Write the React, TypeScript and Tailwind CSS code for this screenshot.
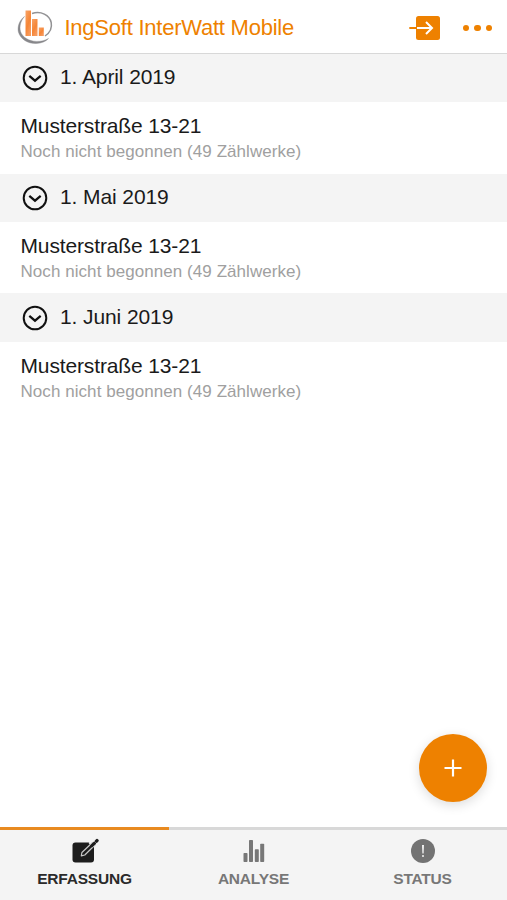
interface Reading {
  date: string;
  address: string;
  state: string;
}

const readings: Reading[] = [
  { date: '1. April 2019', address: 'Musterstraße 13-21', state: 'Noch nicht begonnen (49 Zählwerke)' },
  { date: '1. Mai 2019', address: 'Musterstraße 13-21', state: 'Noch nicht begonnen (49 Zählwerke)' },
  { date: '1. Juni 2019', address: 'Musterstraße 13-21', state: 'Noch nicht begonnen (49 Zählwerke)' },
];

function Logo() {
  return (
    <svg className="mt-[2px]" width="38" height="38" viewBox="0 0 38 38" fill="none">
      <defs>
        <linearGradient id="bar" x1="0" y1="0" x2="0.6" y2="1">
          <stop offset="0" stopColor="#f8a468" />
          <stop offset="0.6" stopColor="#f58536" />
          <stop offset="1" stopColor="#f89a5c" />
        </linearGradient>
      </defs>
      {/* Open swoosh around the bars */}
      <path
        d="M8.500 7.500C3.500 11 1.200 17.500 2.400 23C4.500 30.500 12.500 35 20.500 34.500C25.500 34.200 30 32.500 32.500 29.500C29 31.600 25 32.500 20.500 32.400C13 32.200 6.500 28.500 4.500 22.500C3.200 17.500 4.500 12 8.500 7.500Z"
        fill="#87878a"
        stroke="#87878a"
        strokeWidth="0.400"
      />
      <path d="M16 4.500C25 1.700 33.500 6 35.200 13.500C36.300 19 33.500 24 29 27" stroke="#929294" strokeWidth="1.500" />
      <path d="M9.500 1.500h5.500v25.500H9.500z" fill="url(#bar)" />
      <path d="M16 10h5.500v17H16z" fill="url(#bar)" />
      <path d="M22.800 18.500h5v8.500h-5z" fill="url(#bar)" />
    </svg>
  );
}

function LoginIcon() {
  return (
    <svg width="32" height="26" viewBox="0 0 32 26" fill="none">
      <rect x="7" y="1" width="24" height="24" rx="2.500" fill="#ee8100" />
      <path d="M0.300 13h7" stroke="#ee8100" strokeWidth="2" />
      <path d="M8 13h15M17 7l6 6l-6 6" stroke="#fff" strokeWidth="2" />
    </svg>
  );
}

function ChevronCircle() {
  return (
    <svg width="26" height="26" viewBox="0 0 26 26" fill="none" stroke="#111" strokeWidth="2">
      <circle cx="13" cy="13" r="11.300" />
      <path d="M7.300 10.800l5.700 4.900l5.700-4.900" strokeWidth="2.200" />
    </svg>
  );
}

function EditIcon() {
  return (
    <svg width="28" height="26" viewBox="0 0 28 26" fill="none">
      <rect x="1.500" y="4.500" width="21.500" height="20" rx="3" fill="#1d1d1d" />
      {/* Pencil: light casing first, dark barrel and tip on top */}
      <path d="M19.500 7L24.500 2" stroke="#f3f3f3" strokeWidth="5.500" />
      <path d="M21.500 4.500L10.900 14.500L10.300 17.800L13.800 17L24.500 6.500" fill="#1d1d1d" stroke="#c9c9c9" strokeWidth="1.200" strokeLinejoin="round" />
      <path d="M20 8.500L24.300 4.400" stroke="#1d1d1d" strokeWidth="3" />
      <path d="M25.500 3.100L26 2.600" stroke="#1d1d1d" strokeWidth="3.400" strokeLinecap="round" />
    </svg>
  );
}

function ChartIcon() {
  return (
    <svg width="28" height="26" viewBox="0 0 28 26" fill="#777">
      <rect x="3.500" y="15" width="4" height="9" rx="0.700" />
      <rect x="9" y="2" width="4" height="22" rx="0.700" />
      <rect x="14.800" y="11.300" width="4" height="12.700" rx="0.700" />
      <rect x="20.200" y="5.700" width="4" height="18.300" rx="0.700" />
    </svg>
  );
}

function StatusIcon() {
  return (
    <svg width="28" height="26" viewBox="0 0 28 26">
      <circle cx="14" cy="13" r="12" fill="#737373" />
      <path d="M13 7h2l-.4 8.500h-1.200z" fill="#f3f3f3" />
      <circle cx="14" cy="18" r="1" fill="#f3f3f3" />
    </svg>
  );
}

const tabs = [
  { label: 'ERFASSUNG', icon: <EditIcon />, active: true },
  { label: 'ANALYSE', icon: <ChartIcon />, active: false },
  { label: 'STATUS', icon: <StatusIcon />, active: false },
];

export default function App() {
  return (
    <div className="relative flex h-[900px] w-[507px] flex-col overflow-hidden bg-white font-['Liberation_Sans',Arial,sans-serif] text-[#1a1a1a]">
      <header className="flex h-[54px] shrink-0 items-center border-b border-[#d8d8d8] pr-[15px] pl-[16px] text-[#ee8100]">
        <Logo />
        <h1 className="mt-[2px] ml-[10.500px] text-[22px] leading-none tracking-[-0.240px] whitespace-nowrap">
          IngSoft InterWatt Mobile
        </h1>
        <button className="mt-[3px] ml-auto" aria-label="Anmelden">
          <LoginIcon />
        </button>
        <button className="mt-[3px] ml-[22px] flex gap-[5px]" aria-label="Mehr">
          <span className="size-[6.500px] rounded-full bg-[#ee8100]" />
          <span className="size-[6.500px] rounded-full bg-[#ee8100]" />
          <span className="size-[6.500px] rounded-full bg-[#ee8100]" />
        </button>
      </header>

      <main className="flex-1">
        {readings.map((reading) => (
          <section key={reading.date}>
            <div className="flex h-[48.400px] items-center gap-[12px] bg-[#f4f4f4] pl-[22px]">
              <ChevronCircle />
              <h2 className="mb-[1.500px] text-[21px] leading-[24px] tracking-[-0.100px]">{reading.date}</h2>
            </div>
            <div className="h-[71.300px] pt-[11.800px] pl-[20.500px]">
              <p className="text-[21px] leading-[24px] tracking-[-0.140px]">{reading.address}</p>
              <p className="mt-[4px] text-[17px] leading-[20px] tracking-[0.060px] text-[#a0a0a0]">{reading.state}</p>
            </div>
          </section>
        ))}
      </main>

      <button
        className="absolute top-[734px] left-[419px] flex size-[68px] items-center justify-center rounded-full bg-[#ee8100] shadow-[0_3px_12px_rgba(0,0,0,0.140)]"
        aria-label="Hinzufügen"
      >
        <svg width="18" height="18" viewBox="0 0 18 18" stroke="#fff" strokeWidth="2.200">
          <path d="M9 0.500v17M0.500 9h17" />
        </svg>
      </button>

      <nav className="grid h-[73px] shrink-0 grid-cols-3 bg-[#f4f4f4]">
        {tabs.map((tab) => (
          <button
            key={tab.label}
            className={
              tab.active
                ? 'flex flex-col items-center border-t-[3px] border-[#e88a20] pt-[8px] text-[#2a2a2a]'
                : 'flex flex-col items-center border-t-[3px] border-[#d8d8d8] pt-[8px] text-[#777]'
            }
          >
            {tab.icon}
            <span className="mt-[5px] text-[15.500px] leading-[20px] font-bold tracking-[-0.200px]">{tab.label}</span>
          </button>
        ))}
      </nav>
    </div>
  );
}
